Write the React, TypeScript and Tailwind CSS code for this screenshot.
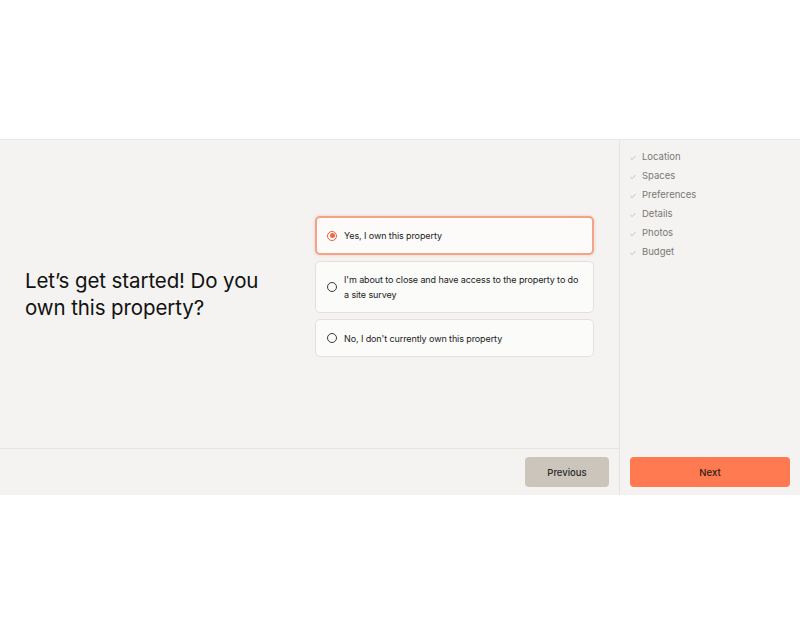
import React from "react";

const options = [
  { label: "Yes, I own this property", selected: true },
  { label: "I'm about to close and have access to the property to do a site survey", selected: false },
  { label: "No, I don't currently own this property", selected: false },
];

const steps = ["Location", "Spaces", "Preferences", "Details", "Photos", "Budget"];

function Check() {
  return (
    <svg width="6" height="6" viewBox="0 0 6 6" className="shrink-0">
      <path d="M0.8 3.3 L2.2 4.6 L5.2 1.4" fill="none" stroke="#bdbab5" strokeWidth="0.9" strokeLinecap="round" strokeLinejoin="round" />
    </svg>
  );
}

export default function App() {
  return (
    <div className="w-[800px] h-[635px] bg-white pt-[139px]" style={{ fontFamily: "Inter, 'Noto Sans', sans-serif" }}>
      <div className="h-[356px] bg-[#f4f3f1] border-t border-[#e9e7e3] flex">
        <div className="w-[620px] flex flex-col border-r border-[#e6e4e0]">
          <div className="flex-1 flex items-center">
            <div className="w-[315px] pl-[25px] pr-4">
              <h1 className="text-[20.5px] leading-[27px] text-[#111111] tracking-[-0.1px]">
                Let’s get started! Do you own this property?
              </h1>
            </div>
            <div className="w-[279px] flex flex-col gap-[6px] -mt-[15px]">
              {options.map((o) => (
                <div
                  key={o.label}
                  className={
                    o.selected
                      ? "flex items-center gap-[7px] rounded-[5px] border-2 border-[#f2a488] bg-[#fcfbfa] pl-[10px] pr-[10px] h-[39px] shadow-[0_0_3px_rgba(242,140,110,0.45)]"
                      : "flex items-center gap-[7px] rounded-[5px] border border-[#e4e1dc] bg-[#fbfbfa] pl-[11px] pr-[10px] py-[10px] min-h-[38px]"
                  }
                >
                  {o.selected ? (
                    <span className="w-[10px] h-[10px] rounded-full border border-[#e8603c] flex items-center justify-center shrink-0">
                      <span className="w-[5px] h-[5px] rounded-full bg-[#ef6a43]" />
                    </span>
                  ) : (
                    <span className="w-[10px] h-[10px] rounded-full border border-[#3a3a3a] shrink-0" />
                  )}
                  <span className="text-[9px] leading-[15px] text-[#1a1a1a] tracking-[-0.1px]">{o.label}</span>
                </div>
              ))}
            </div>
          </div>
          <div className="h-[47px] border-t border-[#e6e4e0] flex items-center justify-end pr-[10px]">
            <button className="w-[84px] h-[30px] rounded-[4px] bg-[#cbc5bc] text-[9.5px] leading-[30px] pt-[1px] font-medium text-[#2a2a2a]">
              Previous
            </button>
          </div>
        </div>
        <div className="w-[180px] flex flex-col">
          <div className="flex-1 pt-[11px] pl-[10px] flex flex-col gap-[6px]">
            {steps.map((s) => (
              <div key={s} className="flex items-center gap-[6px] h-[13px]">
                <Check />
                <span className="text-[9.5px] text-[#7a7875]">{s}</span>
              </div>
            ))}
          </div>
          <div className="h-[47px] flex items-center px-[10px]">
            <button className="w-[160px] h-[30px] rounded-[4px] bg-[#ff7a50] text-[9.5px] leading-[30px] pt-[1px] font-medium text-[#2a1a12]">
              Next
            </button>
          </div>
        </div>
      </div>
    </div>
  );
}
